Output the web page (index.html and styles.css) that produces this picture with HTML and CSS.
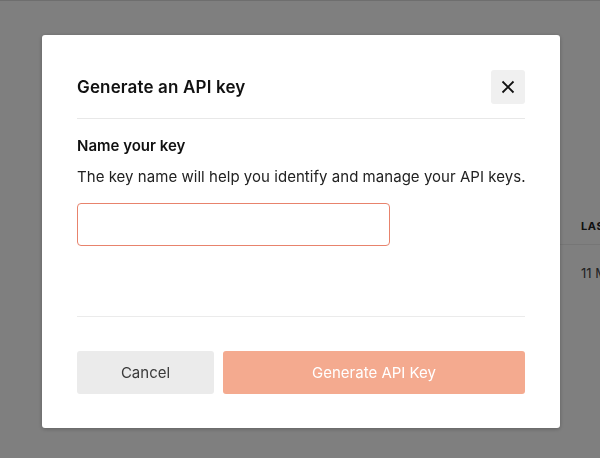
FILE: index.html
```html
<!DOCTYPE html>
<html lang="en">
<head>
<meta charset="utf-8">
<title>Generate an API key</title>
<link rel="stylesheet" href="styles.css">
</head>
<body>
<div class="page">
  <table class="keys">
    <thead>
      <tr><th class="c-name">Name</th><th class="c-key">Key</th><th class="c-created">Created</th><th class="c-last">Last used</th></tr>
    </thead>
    <tbody>
      <tr><td>Default</td><td>sk-••••••••</td><td>10 May 2023</td><td>11 May 2023</td></tr>
    </tbody>
  </table>
</div>
<div class="overlay">
  <div class="modal" role="dialog" aria-labelledby="mt">
    <div class="modal-head">
      <h2 id="mt" class="modal-title">Generate an API key</h2>
      <button class="close" aria-label="Close">
        <svg width="14" height="14" viewBox="0 0 14 14" aria-hidden="true"><path d="M1.5 1.5L12.5 12.5M12.5 1.5L1.5 12.5" stroke="#111" stroke-width="1.8" stroke-linecap="butt"/></svg>
      </button>
    </div>
    <div class="modal-body">
      <div class="label">Name your key</div>
      <p class="desc">The key name will help you identify and manage your API keys.</p>
      <input class="name-input" type="text" aria-label="Key name">
    </div>
    <div class="modal-foot">
      <button class="btn btn-cancel">Cancel</button>
      <button class="btn btn-primary">Generate API Key</button>
    </div>
  </div>
</div>
</body>
</html>
```

FILE: styles.css
```css
* { box-sizing: border-box; }
html, body { margin: 0; padding: 0; }
body {
  width: 600px;
  height: 458px;
  overflow: hidden;
  font-family: Inter, "Noto Sans", Arial, sans-serif;
  background: #fff;
  color: #111;
}
.page {
  height: 458px;
  border-top: 1px solid #dcdcdc;
  padding: 208px 0 0 0;
}
.keys {
  border-collapse: collapse;
  margin-left: 60px;
  width: 620px;
  table-layout: fixed;
}
.keys th {
  text-align: left;
  font-size: 11px;
  font-weight: 700;
  text-transform: uppercase;
  letter-spacing: 0.6px;
  color: #222;
  height: 35px;
  padding: 0;
  border-bottom: 1px solid #ededed;
}
.keys td {
  font-size: 13px;
  color: #444;
  height: 58px;
  padding: 0;
}
.c-name { width: 200px; }
.c-key { width: 180px; }
.c-created { width: 141px; }
.c-last { width: 99px; }
.overlay {
  position: fixed;
  inset: 0;
  background: rgba(0, 0, 0, 0.5);
  display: flex;
  align-items: flex-start;
  justify-content: flex-start;
  padding: 35px 0 0 42px;
}
.modal {
  width: 518px;
  height: 393px;
  background: #fff;
  border-radius: 3px;
  box-shadow: 0 1px 4px rgba(0, 0, 0, 0.25);
  padding: 35px 35px 34px;
  display: flex;
  flex-direction: column;
}
.modal-head {
  display: flex;
  align-items: center;
  justify-content: space-between;
  padding-bottom: 14px;
  border-bottom: 1px solid #e8e8e8;
}
.modal-title {
  margin: 0;
  font-size: 17px;
  font-weight: 600;
  letter-spacing: 0.15px;
  color: #111;
  line-height: 34px;
}
.close {
  width: 34px;
  height: 34px;
  border: 0;
  border-radius: 3px;
  background: #f0f0f0;
  display: flex;
  align-items: center;
  justify-content: center;
  padding: 0;
}
.modal-body {
  padding-top: 17px;
  flex: 1;
}
.label {
  font-size: 15px;
  font-weight: 600;
  line-height: 20px;
  color: #111;
}
.desc {
  margin: 10px 0 0;
  font-size: 15px;
  line-height: 22px;
  letter-spacing: 0.04px;
  white-space: nowrap;
  color: #222;
}
.name-input {
  display: block;
  margin-top: 15px;
  width: 313px;
  height: 43px;
  border: 1px solid #e8836c;
  border-radius: 4px;
  outline: none;
  background: #fff;
}
.modal-foot {
  border-top: 1px solid #ebebeb;
  padding-top: 34px;
  display: flex;
  gap: 9px;
}
.btn {
  height: 43px;
  border: 0;
  border-radius: 3px;
  font-family: inherit;
  font-size: 15px;
}
.btn-cancel {
  width: 137px;
  background: #ebebeb;
  color: #3a3a3a;
}
.btn-primary {
  flex: 1;
  background: #f4aa8f;
  color: #fff;
}
```
